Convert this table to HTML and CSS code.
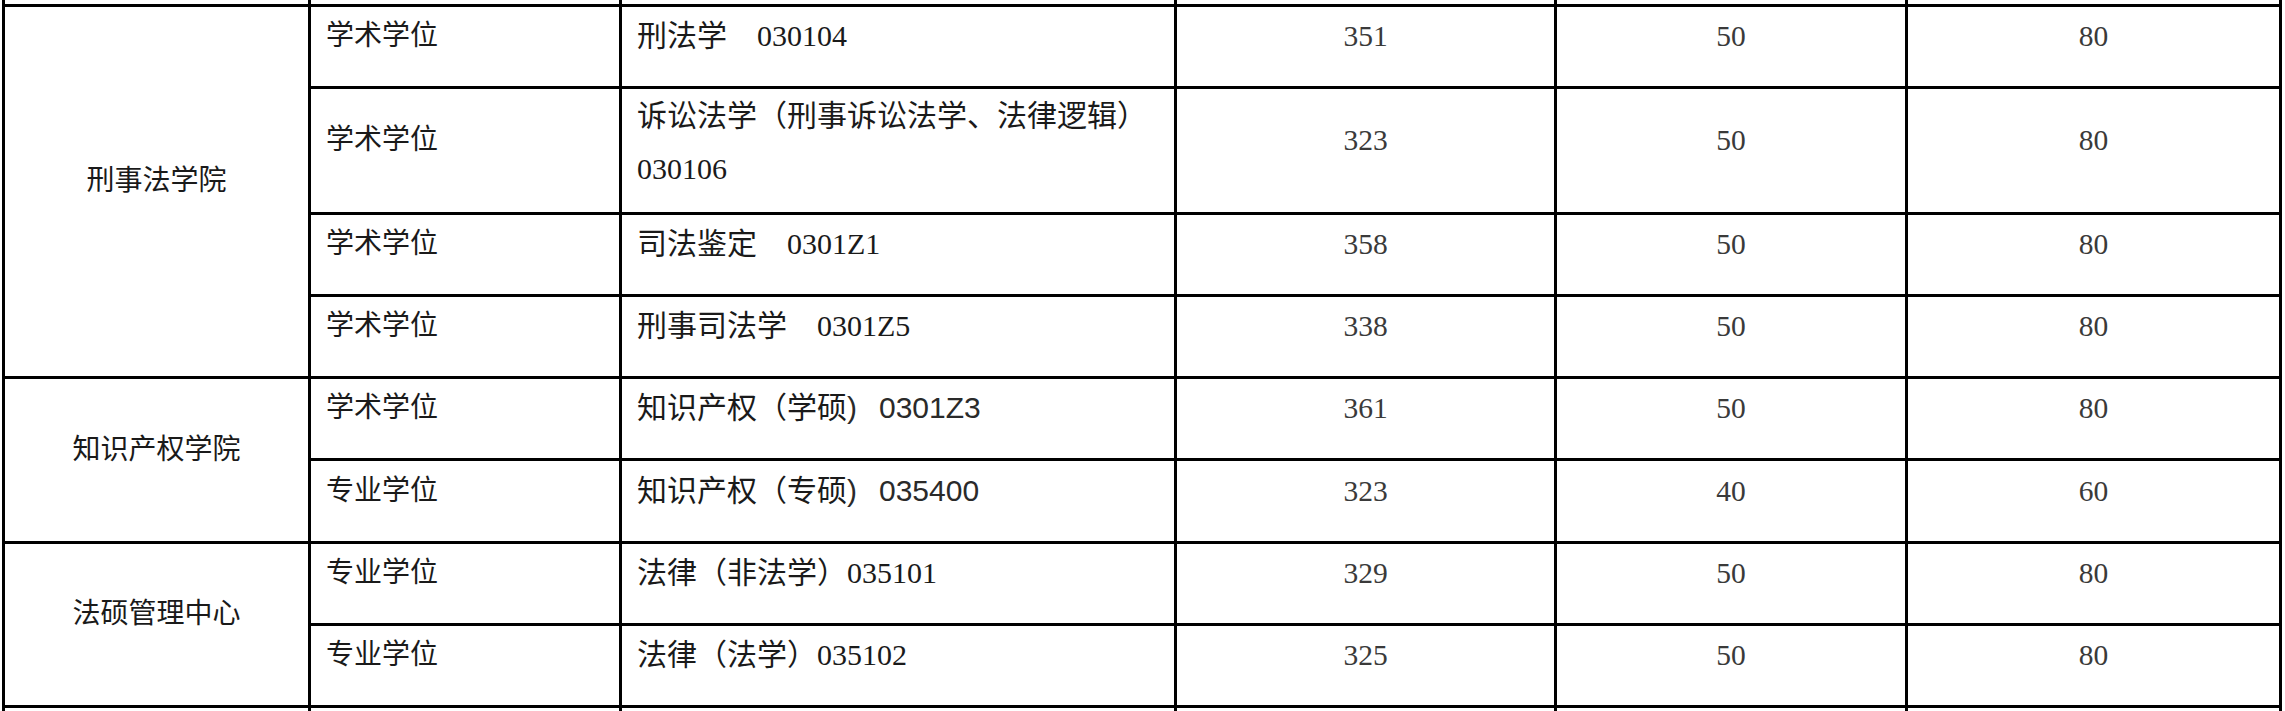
FILE: index.html
```html
<!DOCTYPE html>
<html lang="zh-CN">
<head>
<meta charset="utf-8">
<title>招生分数线</title>
<link rel="stylesheet" href="styles.css">
</head>
<body>
<table class="grid">
  <colgroup>
    <col class="c1"><col class="c2"><col class="c3"><col class="c4"><col class="c5"><col class="c6">
  </colgroup>
  <tbody>
    <tr class="stub-top"><td></td><td></td><td></td><td></td><td></td><td></td></tr>

    <tr class="r82">
      <td class="college" rowspan="4">刑事法学院</td>
      <td>学术学位</td>
      <td class="major">刑法学　030104</td>
      <td class="num">351</td><td class="num">50</td><td class="num">80</td>
    </tr>
    <tr class="r126">
      <td>学术学位</td>
      <td class="major two">诉讼法学（刑事诉讼法学、法律逻辑）<br>030106</td>
      <td class="num">323</td><td class="num">50</td><td class="num">80</td>
    </tr>
    <tr class="r82">
      <td>学术学位</td>
      <td class="major">司法鉴定　0301Z1</td>
      <td class="num">358</td><td class="num">50</td><td class="num">80</td>
    </tr>
    <tr class="r82">
      <td>学术学位</td>
      <td class="major">刑事司法学　0301Z5</td>
      <td class="num">338</td><td class="num">50</td><td class="num">80</td>
    </tr>

    <tr class="r82">
      <td class="college" rowspan="2">知识产权学院</td>
      <td>学术学位</td>
      <td class="major">知识产权（学硕<span class="sans">)<span class="code">0301Z3</span></span></td>
      <td class="num">361</td><td class="num">50</td><td class="num">80</td>
    </tr>
    <tr class="r83">
      <td>专业学位</td>
      <td class="major">知识产权（专硕<span class="sans">)<span class="code">035400</span></span></td>
      <td class="num">323</td><td class="num">40</td><td class="num">60</td>
    </tr>

    <tr class="r82">
      <td class="college" rowspan="2">法硕管理中心</td>
      <td>专业学位</td>
      <td class="major">法律（非法学）035101</td>
      <td class="num">329</td><td class="num">50</td><td class="num">80</td>
    </tr>
    <tr class="r82">
      <td>专业学位</td>
      <td class="major">法律（法学）035102</td>
      <td class="num">325</td><td class="num">50</td><td class="num">80</td>
    </tr>

    <tr class="stub-bottom"><td></td><td></td><td></td><td></td><td></td><td></td></tr>
  </tbody>
</table>
</body>
</html>
```

FILE: styles.css
```css
html, body {
  margin: 0;
  padding: 0;
  background: #ffffff;
  overflow: hidden;
}

.grid {
  margin-left: 2px;
  width: 2280px;
  table-layout: fixed;
  border-collapse: collapse;
  font-family: "Liberation Serif", "Noto Sans CJK SC", serif;
  font-size: 28px;
  color: #1a1a1a;
}

.c1 { width: 306px; }
.c2 { width: 311px; }
.c3 { width: 555px; }
.c4 { width: 380px; }
.c5 { width: 351px; }
.c6 { width: 374px; }

.grid td {
  border: 3px solid #000000;
  padding: 14px 14px 34px 15px;
  line-height: 30px;
  vertical-align: middle;
  text-align: left;
  white-space: nowrap;
}

.grid td.major {
  font-size: 30px;
}

.grid td.college {
  text-align: center;
  padding-left: 0;
  padding-right: 0;
}

.grid td.num {
  text-align: center;
  font-size: 29.5px;
  color: #3a3a3a;
  padding-left: 0;
  padding-right: 0;
}

.grid td.two {
  padding-top: 0;
  padding-bottom: 17px;
  line-height: 53px;
}

.sans {
  font-family: "Liberation Sans", "Noto Sans CJK SC", sans-serif;
  font-size: 30px;
  color: #2a2a2a;
}

.code {
  margin-left: 22px;
}

.stub-top { height: 5px; }
.stub-top td {
  border-top: none;
  padding: 0;
  line-height: 0;
}

.stub-bottom { height: 20px; }
.stub-bottom td {
  border-bottom: none;
  padding: 0;
  line-height: 0;
}

.r82 { height: 82px; }
.r83 { height: 83px; }
.r126 { height: 126px; }
```
